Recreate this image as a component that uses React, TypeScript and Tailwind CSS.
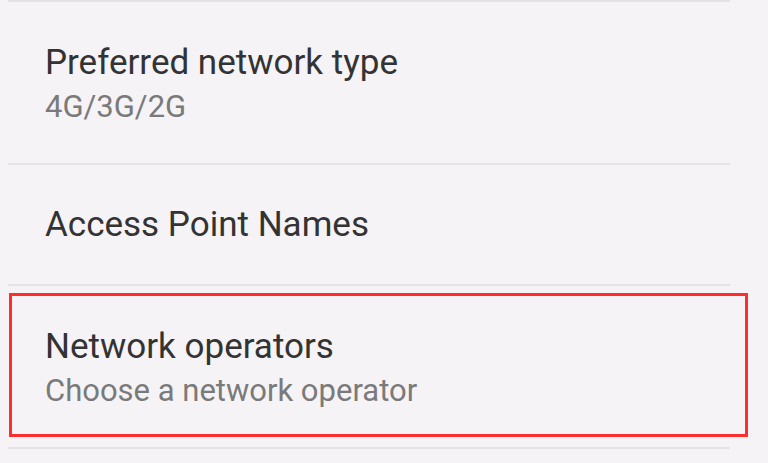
const rows = [
  { title: "Preferred network type", summary: "4G/3G/2G", pad: "pt-[40px] pb-[38px]" },
  { title: "Access Point Names", pad: "pt-[39px] pb-[38px]" },
  { title: "Network operators", summary: "Choose a network operator", pad: "pt-[40px] pb-[38px]", highlight: true },
];

function SettingRow({ title, summary, pad, highlight }: { title: string; summary?: string; pad: string; highlight?: boolean }) {
  return (
    <div className="relative border-b-2 border-[#e6e2e4] mr-[38px] ml-2">
      <div className={"pl-[37px] " + pad}>
        <div className="text-[35px] leading-[42px] text-[#333333]">{title}</div>
        {summary && <div className="mt-[5px] text-[31px] leading-[36px] text-[#7a7a7a]">{summary}</div>}
      </div>
      {highlight && (
        <div className="absolute left-[1px] top-[7px] w-[739px] h-[144px] border-[3px] border-[#ff2e2e]" />
      )}
    </div>
  );
}

export default function App() {
  return (
    <div className="w-[768px] h-[463px] overflow-hidden bg-[#f5f3f6]" style={{ fontFamily: "Roboto, 'Noto Sans', sans-serif" }}>
      <div className="ml-2 mr-[38px] h-[2px] bg-[#e6e2e4]" />
      {rows.map(r => (
        <SettingRow key={r.title} {...r} />
      ))}
    </div>
  );
}
